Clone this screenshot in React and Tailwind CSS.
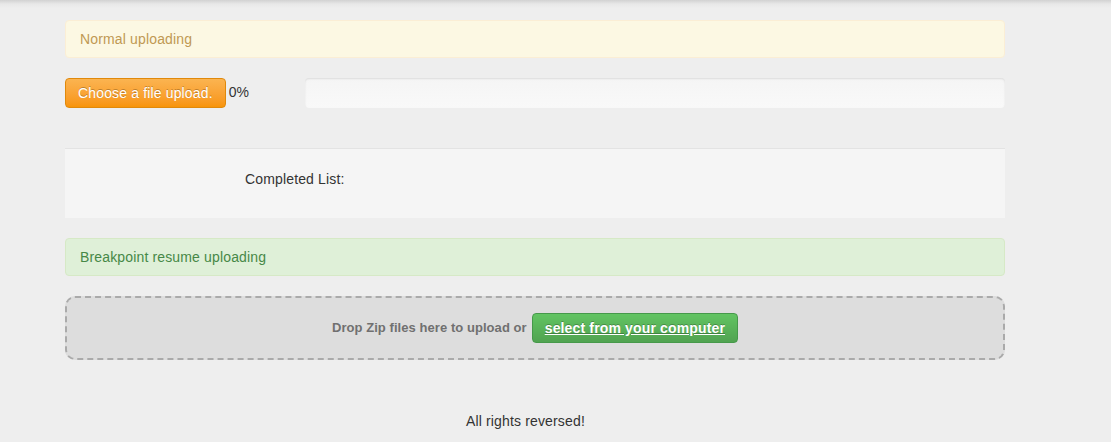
export default function App() {
  return (
    <div className="min-h-[442px] w-full bg-[#eeeeee] font-['Liberation_Sans',Arial,sans-serif] text-[14px] leading-[20px] tracking-[0.15px] text-[#333333]">
      <div className="h-[8px] w-full bg-gradient-to-b from-[#d2d2d2] via-[#e8e8e8] to-[#eeeeee]" />
      <div className="ml-[65px] w-[940px] pt-[12px]">
        <div className="rounded-[4px] border border-[#fbeed5] bg-[#fcf8e3] py-[8px] pl-[14px] pr-[35px] text-[#c09853]">
          Normal uploading
        </div>

        <div className="mt-[20px] flex h-[30px] gap-[20px]">
          <div className="flex w-[220px] items-start">
            <button className="h-[30px] rounded-[4px] border border-[#e0890b] bg-gradient-to-b from-[#fbb450] to-[#f89406] px-[12px] text-[14px] leading-[20px] tracking-[0.15px] text-white [text-shadow:0_-1px_0_rgba(0,0,0,0.25)]">
              Choose a file upload.
            </button>
            <span className="ml-[3px] pt-[4px] text-[#333]">0%</span>
          </div>
          <div className="h-[30px] w-[700px] rounded-[4px] bg-gradient-to-b from-[#f5f5f5] to-[#f9f9f9] shadow-[inset_0_1px_2px_rgba(0,0,0,0.1)]" />
        </div>

        <div className="mt-[40px] h-[70px] border-t border-[#e3e3e3] bg-[#f5f5f5] pl-[180px] pt-[20px]">
          Completed List:
        </div>

        <div className="mt-[20px] rounded-[4px] border border-[#d6e9c6] bg-[#dff0d8] py-[8px] pl-[14px] pr-[35px] text-[#468847]">
          Breakpoint resume uploading
        </div>

        <div className="mt-[20px] flex h-[64px] items-center justify-center rounded-[10px] border-2 border-dashed border-[#aaaaaa] bg-[#dddddd]">
          <span className="text-[13px] font-bold tracking-[0.06px] text-[#707070]">Drop Zip files here to upload or</span>
          <button className="ml-[5px] h-[30px] rounded-[4px] border border-[#46994a] bg-gradient-to-b from-[#62c462] to-[#51a351] px-[12px] text-[14px] font-bold leading-[20px] tracking-[0.15px] text-white underline [text-shadow:0_-1px_0_rgba(0,0,0,0.25)]">
            select from your computer
          </button>
        </div>

        <div className="mt-[51px] pl-[401px]">All rights reversed!</div>
      </div>
    </div>
  );
}
